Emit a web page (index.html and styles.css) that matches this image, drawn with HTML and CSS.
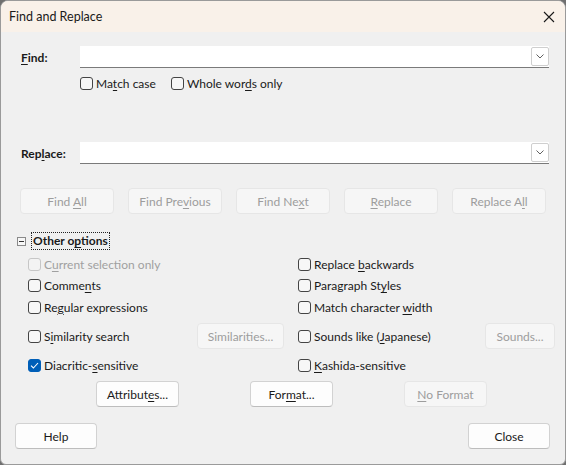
FILE: index.html
```html
<!DOCTYPE html>
<html>
<head>
<meta charset="utf-8">
<link rel="stylesheet" href="styles.css">
</head>
<body>
<div class="window">
  <div class="titlebar">
    <span class="title">Find and Replace</span>
    <svg class="close" width="12" height="12" viewBox="0 0 12 12"><path d="M1 1 L11 11 M11 1 L1 11" stroke="#1a1a1a" stroke-width="1.1" fill="none"/></svg>
  </div>
  <div class="content">
    <div class="field-row">
      <label class="field-label"><u>F</u>ind:</label>
      <div class="combo"><div class="combo-btn"><svg width="8" height="5" viewBox="0 0 8 5"><path d="M0.5 0.5 L4 4 L7.5 0.5" stroke="#606060" fill="none" stroke-width="1"/></svg></div></div>
    </div>
    <div class="find-checks">
      <span class="check"><span class="box"></span><span class="t">Ma<u>t</u>ch case</span></span>
      <span class="check"><span class="box"></span><span class="t">Whole wor<u>d</u>s only</span></span>
    </div>
    <div class="field-row replace-row">
      <label class="field-label">Rep<u>l</u>ace:</label>
      <div class="combo"><div class="combo-btn"><svg width="8" height="5" viewBox="0 0 8 5"><path d="M0.5 0.5 L4 4 L7.5 0.5" stroke="#606060" fill="none" stroke-width="1"/></svg></div></div>
    </div>
    <div class="action-row">
      <span class="btn disabled"><span class="t">Find <u>A</u>ll</span></span>
      <span class="btn disabled"><span class="t">Find Pre<u>v</u>ious</span></span>
      <span class="btn disabled"><span class="t">Find Ne<u>x</u>t</span></span>
      <span class="btn disabled"><span class="t"><u>R</u>eplace</span></span>
      <span class="btn disabled"><span class="t">Replace A<u>l</u>l</span></span>
    </div>
    <div class="expander">
      <span class="exp-box"><span class="minus"></span></span>
      <span class="exp-label">Other o<u>p</u>tions</span>
    </div>
    <div class="options">
      <div class="opt"><span class="check disabled"><span class="box"></span><span class="t">C<u>u</u>rrent selection only</span></span></div>
      <div class="opt"><span class="check"><span class="box"></span><span class="t">Replace <u>b</u>ackwards</span></span></div>
      <div class="opt"><span class="check"><span class="box"></span><span class="t">Comme<u>n</u>ts</span></span></div>
      <div class="opt"><span class="check"><span class="box"></span><span class="t">Paragraph St<u>y</u>les</span></span></div>
      <div class="opt"><span class="check"><span class="box"></span><span class="t">Re<u>g</u>ular expressions</span></span></div>
      <div class="opt"><span class="check"><span class="box"></span><span class="t">Match character <u>w</u>idth</span></span></div>
      <div class="opt"><span class="check"><span class="box"></span><span class="t">S<u>i</u>milarity search</span></span><span class="btn disabled sim"><span class="t">Similarities...</span></span></div>
      <div class="opt"><span class="check"><span class="box"></span><span class="t">Sounds like (<u>J</u>apanese)</span></span><span class="btn disabled snd"><span class="t">Sounds...</span></span></div>
      <div class="opt"><span class="check checked"><span class="box"><svg width="9" height="7" viewBox="0 0 9 7"><path d="M1 3.6 L3.4 6 L8 1" stroke="#fff" stroke-width="1.1" fill="none"/></svg></span><span class="t">Diacritic-<u>s</u>ensitive</span></span></div>
      <div class="opt"><span class="check"><span class="box"></span><span class="t"><u>K</u>ashida-sensitive</span></span></div>
    </div>
    <div class="attr-row">
      <span class="btn"><span class="t">Attribut<u>e</u>s...</span></span>
      <span class="btn"><span class="t">For<u>m</u>at...</span></span>
      <span class="btn disabled"><span class="t"><u>N</u>o Format</span></span>
    </div>
    <div class="bottom-row">
      <span class="btn"><span class="t">Help</span></span>
      <span class="btn"><span class="t">Close</span></span>
    </div>
  </div>
</div>
</body>
</html>
```
FILE: styles.css
```css
html, body {
  margin: 0;
  padding: 0;
  background: #6f6f6f;
}
body {
  font-family: "Lato", "Noto Sans", sans-serif;
  font-size: 12px;
  color: #1a1a1a;
}
u {
  text-decoration: underline;
  text-underline-offset: 2px;
  text-decoration-thickness: 1px;
}
.window {
  width: 566px;
  height: 465px;
  box-sizing: border-box;
  border: 1px solid #9a9a9a;
  border-radius: 8px 8px 6px 6px;
  background: #f0f0f0;
  overflow: hidden;
  display: flex;
  flex-direction: column;
}
.titlebar {
  height: 31px;
  background: #f9f1e9;
  display: flex;
  align-items: center;
  justify-content: space-between;
  padding: 0 10px 0 8px;
  flex-shrink: 0;
}
.title {
  color: #1a1a1a;
  font-size: 12.5px;
}
.content {
  display: flex;
  flex-direction: column;
  padding: 14px 0 0 0;
}
.field-row {
  display: flex;
  align-items: center;
  height: 22px;
  padding: 0 16px 0 20px;
}
.field-label {
  width: 59px;
  font-weight: bold;
}
.combo {
  flex: 1;
  height: 22px;
  box-sizing: border-box;
  background: #fff;
  border-bottom: 1px solid #7a7a7a;
  display: flex;
  justify-content: flex-end;
  align-items: center;
}
.combo-btn {
  width: 18px;
  height: 19px;
  box-sizing: border-box;
  border: 1px solid #cfcfcf;
  border-radius: 2px;
  background: #fff;
  display: flex;
  align-items: center;
  justify-content: center;
  margin-bottom: 1px;
}
.find-checks {
  display: flex;
  gap: 15px;
  padding-left: 79px;
  margin-top: 7px;
  height: 16px;
  align-items: center;
}
.check {
  display: inline-flex;
  align-items: center;
  gap: 3px;
  white-space: nowrap;
}
.box {
  width: 11px;
  height: 11px;
  border: 1px solid #444;
  border-radius: 3px;
  background: #f7f7f7;
  display: inline-flex;
  align-items: center;
  justify-content: center;
  flex-shrink: 0;
}
.check.disabled {
  color: #a0a0a0;
}
.check.disabled .box {
  border-color: #c6c6c6;
  background: #f3f3f3;
}
.check.checked .box {
  background: #005fb8;
  border-color: #005fb8;
}
.replace-row {
  margin-top: 51px;
}
.btn {
  display: inline-flex;
  align-items: center;
  justify-content: center;
  height: 26px;
  box-sizing: border-box;
  border: 1px solid #d2d2d2;
  border-bottom-color: #bdbdbd;
  border-radius: 4px;
  background: #fdfdfd;
  white-space: nowrap;
  color: #1a1a1a;
}
.btn.disabled {
  background: #f6f6f6;
  border-color: #e6e6e6;
  color: #9d9d9d;
}
.action-row {
  display: flex;
  gap: 14px;
  padding-left: 19px;
  margin-top: 24px;
}
.action-row .btn {
  width: 94px;
}
.expander {
  display: flex;
  align-items: center;
  margin-top: 17px;
  padding-left: 16px;
  height: 20px;
}
.exp-box {
  width: 9px;
  height: 9px;
  box-sizing: border-box;
  border: 1px solid #8a8a8a;
  display: inline-flex;
  align-items: center;
  justify-content: center;
  background: #f7f7f7;
}
.minus {
  width: 5px;
  height: 1px;
  background: #333;
}
.exp-label {
  margin-left: 5px;
  font-weight: bold;
  border: 1px dotted #222;
  padding: 0 1px;
  line-height: 16px;
}
.options {
  display: grid;
  grid-template-columns: 256px 257px;
  grid-template-rows: 22px 21px 22px 36px 22px;
  column-gap: 14px;
  padding-left: 27px;
  margin-top: 2px;
}
.opt {
  display: flex;
  align-items: center;
  justify-content: space-between;
}
.btn.sim {
  width: 87px;
}
.btn.snd {
  width: 70px;
}
.attr-row {
  display: flex;
  gap: 71px;
  padding-left: 95px;
  margin-top: 5px;
}
.attr-row .btn {
  width: 83px;
}
.bottom-row {
  display: flex;
  justify-content: space-between;
  padding: 0 15px 0 14px;
  margin-top: 16px;
}
.bottom-row .btn {
  width: 82px;
}
```
